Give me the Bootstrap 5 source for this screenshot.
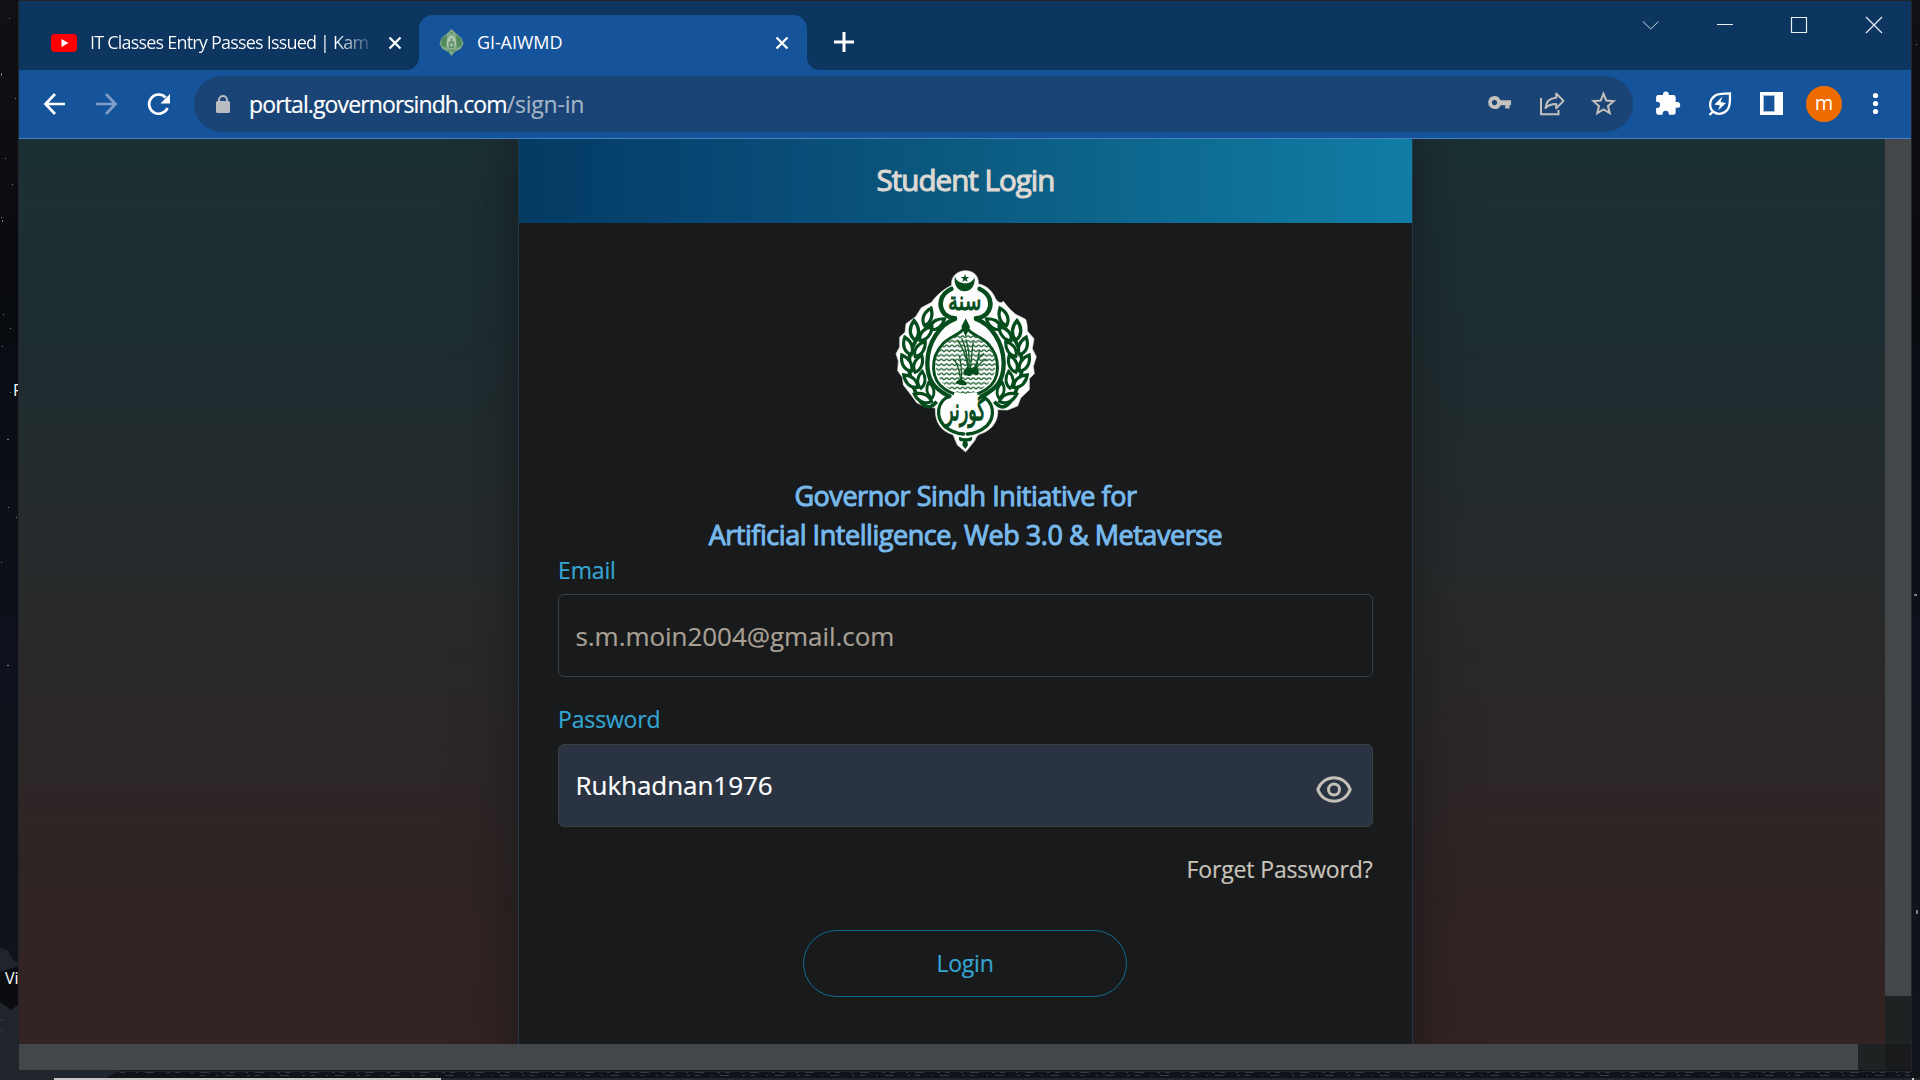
<!DOCTYPE html>
<html lang="en">
<head>
<meta charset="utf-8">
<title>GI-AIWMD</title>
<link href="https://cdn.jsdelivr.net/npm/bootstrap@5.3.0/dist/css/bootstrap.min.css" rel="stylesheet">
<style>
html,body{height:1080px;overflow:hidden}
body{font-family:"Open Sans","Noto Sans",sans-serif;background:#0b0d14;color:#fff}
.desk{position:absolute;inset:0;width:1920px;height:1080px}
.desk-label{position:absolute;font-size:16px;line-height:20px}
.win{width:1892px;height:1070px;margin:1px 0 0 19px;box-shadow:0 0 0 1px #232427}
.strip{height:69px;background:#0c3560}
.tab-idle{width:400px;padding-left:32px;height:69px;padding-top:14px}
.tab-live{width:388px;height:55px;margin-top:14px;padding-left:20px;background:#15539a;border-radius:14px 14px 0 0;position:relative}
.tab-live::before,.tab-live::after{content:"";position:absolute;bottom:0;width:12px;height:12px}
.tab-live::before{left:-12px;background:radial-gradient(circle at 0 0,#0c3560 11.5px,#15539a 12px)}
.tab-live::after{right:-12px;background:radial-gradient(circle at 100% 0,#0c3560 11.5px,#15539a 12px)}
.tab-title{font-size:18px;line-height:24px;white-space:nowrap;margin-bottom:2px}
.t1{width:279px;margin-left:13px;margin-right:19px;letter-spacing:-.8px;background:linear-gradient(90deg,#fff 88%,#3d5c7e);-webkit-background-clip:text;color:transparent}
.t2{margin-left:13px;letter-spacing:-.1px}
.tools{height:69px;background:#15539a;border-bottom:1px solid #4a7fc0}
.omni{width:1439px;height:56px;border-radius:28px;background:#194475;padding-left:22px;padding-right:17px}
.url{font-size:23px;line-height:30px;margin-left:19px;margin-bottom:1px;letter-spacing:-.88px;-webkit-text-stroke:.2px}
.url i{font-style:normal;color:#a3b4c8;letter-spacing:-.2px}
.ava{width:36px;height:36px;border-radius:50%;background:#ef6c00;font-size:20px;line-height:33px;text-align:center}
.page{height:905px;background:linear-gradient(#1b3033 0%,#1e2d31 22%,#282a2b 50%,#2f2424 80%,#332323 100%);width:1866px;overflow:hidden}
.login{width:895px;height:1000px;margin-left:499px;background:#181a1b;box-shadow:0 0 45px 5px rgba(20,22,23,.65);border-left:1px solid #24364a;border-right:1px solid #24364a}
.login-head{height:84px;background:linear-gradient(90deg,#033b63 0%,#074672 20%,#0b5a80 50%,#117da5 100%);font-size:29.500px;letter-spacing:-.95px;-webkit-text-stroke:1.1px #dcd9d4;color:#dcd9d4;line-height:81px}
.logo{width:170px;height:210px;margin:32px auto 0 361px}
.inst{font-size:27px;letter-spacing:-.46px;-webkit-text-stroke:1px #77b9ec;line-height:39px;color:#77b9ec;margin-top:11px}
.pad{padding:0 39.5px 0 38.5px}
.lab{color:#35a5d2;font-size:23px;line-height:34px;letter-spacing:-.15px;padding-left:.5px}
.field{height:83px;border:1px solid #3b3f42;border-radius:6px;padding:0 20px 0 17px;font-size:26px;letter-spacing:-.05px;-webkit-text-stroke:.2px;background:#181a1b;color:#a8a095}
.field.fill2{background:#2a3342;color:#fff}
.forgot{font-size:23px;line-height:34px;letter-spacing:-.15px;color:#c8c3bb}
.enter{width:324px;height:67px;border:1px solid #106c93;border-radius:34px;color:#35a5d2;font-size:23px;letter-spacing:-.2px;padding:0}
.lab,.forgot,.enter{-webkit-text-stroke:.2px}
.vbar{width:26px;height:905px;background:#1e2223}
.vthumb{height:857px;background:#434749}
.hbar{height:26px;background:#1e2223}
.hthumb{width:1839px;background:#434749}
.corner{width:26px;background:#181a1b}
svg{flex-shrink:0;display:block}
</style>
<script src="https://cdn.jsdelivr.net/npm/bootstrap@5.3.0/dist/js/bootstrap.bundle.min.js"></script>
</head>
<body>
<svg class="desk" viewBox="0 0 1920 1080">
<defs><linearGradient id="night" x2="0" y2="1"><stop offset="0" stop-color="#101114"/><stop offset=".25" stop-color="#090b10"/><stop offset=".6" stop-color="#0d111b"/><stop offset="1" stop-color="#10131a"/></linearGradient></defs>
<path fill="url(#night)" d="M0 0H1920V1080H0z"/>
<path fill="#20242d" d="M0 948l8 2 5 10 6 4v116H0z"/><path fill="#0b0c10" d="M0 972l19-6v38l-8 6-11-8z"/>
<path fill="#20252e" d="M0 1042h19v28H120l-14 8H0z"/>
<path fill="none" stroke="#343842" stroke-dasharray="5 11 2 7 9 13 3 5" d="M120 1072.500H1910M200 1075.500H1910M0 1030l18 4M0 1020l18 2"/>
<g fill="#7d8187"><path d="M5 158h1v1H5zM12 184h1v1h-1zM1 217h1v1H1zM2 220h1v2H2zM3 314h1v1H3zM10 328h1v1h-1zM2 346h1v1H2zM10 392h1v1h-1zM7 439h2v1H7zM8 507h1v1H8zM16 517h1v1h-1zM1 562h1v1H1zM1 73h1v3H1zM1916 44h1v1h-1zM1916 910h2v4h-2zM15 98h1v1h-1zM9 18h1v1H9zM1914 594h3v2h-3zM7 665h2v1H7z"/></g>
<path fill="#252629" d="M0 1078H1920v2H0z"/><path fill="#c9c7c6" d="M54 1078H441v2H54zM1912 1078h2v2h-2z"/>
</svg>
<span class="desk-label" style="left:13px;top:380px">F</span>
<span class="desk-label" style="left:5px;top:968px">Vi</span>
<main class="win position-relative d-flex flex-column">
<div class="strip d-flex">
 <div class="tab-idle d-flex align-items-center">
  <svg width="26" height="18" viewBox="0 0 26 18"><rect width="26" height="18" rx="4" fill="#f00"/><path fill="#fff" d="M10.500 5v8l7-4z"/></svg>
  <span class="tab-title t1">IT Classes Entry Passes Issued | Kam</span>
  <svg width="14" height="14" viewBox="0 0 14 14"><path d="M1.500 1.500l11 11M12.500 1.500l-11 11" stroke="#fff" stroke-width="2.300"/></svg>
 </div>
 <div class="tab-live d-flex align-items-center">
  <svg width="25" height="27" viewBox="0 0 25 27"><path fill="#82a985" d="M12.500 0l4 4 6 5 2 6-3 5-6 3-3 4-3-4-6-3-3-5 2-6 6-5z"/><path fill="#4f8a5c" d="M3 9l5-3-1 13-5-3zM22 9l-5-3 1 13 5-3z"/><ellipse cx="12.500" cy="14" rx="4.500" ry="7.500" fill="#b4c8b2"/><path stroke="#5f9169" stroke-width="1.800" fill="none" d="M12.500 9.500v3M10.500 13.500h4v5h-4zM9.500 21.500h6M12.500 3v2.500"/></svg>
  <span class="tab-title t2">GI-AIWMD</span>
  <svg class="ms-auto me-3" style="transform:translateX(-2px)" width="14" height="14" viewBox="0 0 14 14"><path d="M1.500 1.500l11 11M12.500 1.500l-11 11" stroke="#fff" stroke-width="2.300"/></svg>
 </div>
 <svg style="margin:31px 0 0 27px" width="20" height="20" viewBox="0 0 20 20"><path d="M10 0v20M0 10h20" stroke="#fff" stroke-width="3"/></svg>
 <svg class="ms-auto" style="margin-top:15px;margin-right:28px" width="241" height="18" viewBox="0 0 241 18"><g fill="none" stroke="#e9eef4" stroke-width="1.200"><path stroke-width=".9" d="M1 5.500l7.700 7.500 7.700-7.500"/><path d="M75 8.500h16M149.500 1.500h15v15h-15zM224 1l16 16M240 1l-16 16"/></g></svg>
</div>
<div class="tools d-flex align-items-center">
 <svg width="175" height="28" viewBox="19 89 175 28"><g fill="none" stroke="#fff" stroke-width="2.700"><path d="M65 103H46M55 93l-9.500 10L55 113"/><path stroke="#7f9fca" d="M96 103h19M106 93l9.500 10-9.500 10"/><path d="M167.500 107a9.600 9.600 0 1 1-1.800-10.500"/></g><path fill="#fff" d="M170 93v9.500h-9.500z"/></svg>
 <div class="omni d-flex align-items-center">
  <svg width="14" height="18" viewBox="0 0 14 18"><rect y="6" width="14" height="12" rx="1.500" fill="#b9bcc0"/><path fill="none" stroke="#b9bcc0" stroke-width="2" d="M3 7V5a4 4 0 0 1 8 0v2"/></svg>
  <span class="url">portal.governorsindh.com<i>/sign-in</i></span>
  <svg class="ms-auto" width="128" height="26" viewBox="1488 91 128 26"><path fill="#c3c0be" fill-rule="evenodd" d="M1494.500 96a6.500 6.500 0 0 1 6 4.200H1511v5h-1.500v3.200h-4.200v-3.200h-4.600a6.500 6.500 0 1 1-6.200-9.200zm0 4a2.500 2.500 0 1 0 0 5.200 2.500 2.500 0 0 0 0-5.200z"/><g fill="none" stroke="#c3c0be" stroke-width="2"><path d="M1541 98v16.300h17.500V110"/><path stroke-linejoin="round" d="M1545.500 108c.6-6 4-10 10.700-10.300V93.500l7.300 7.400-7.300 7.300v-4.100c-5 0-8 1.100-10.700 3.900z"/><path stroke-width="2.100" d="M1603.500 93.800l2.800 6.800 7.200.6-5.500 4.800 1.700 7.100-6.200-3.700-6.200 3.700 1.700-7.100-5.500-4.800 7.200-.6z"/></g></svg>
 </div>
 <svg style="margin-left:22px" width="132" height="28" viewBox="1655 90 132 28"><path transform="translate(-1)" fill="#fff" d="M1678.300 102h-1.600v-4.600a2.300 2.300 0 0 0-2.300-2.300h-4.600v-.7a2.900 2.900 0 0 0-5.800 0v.7h-4.600a2.300 2.300 0 0 0-2.300 2.300v4.300h.9a3.100 3.100 0 0 1 0 6.200h-.9v4.600a2.300 2.300 0 0 0 2.300 2.300h4.200v-1a3.100 3.100 0 0 1 6.200 0v1h4.600a2.300 2.300 0 0 0 2.300-2.300V107.800h1.600a2.900 2.900 0 0 0 0-5.800z"/><path fill="none" stroke="#fff" stroke-width="2.300" d="M1709.500 115l3.500-3.500c-5-5-3-12.500 2-15.800 4-2.500 9-1.700 15-2.200-.2 6 .7 11.500-2.300 15.800-3.500 5-10 6-14.700 2.200"/><path fill="#fff" d="M1722.500 96.500l-8 8 5.500 1-2 5 8-7.500-5.500-1zM1760 92h23v23h-23z"/><path fill="#15539a" stroke="#a7bedb" d="M1763.500 95.500h11v16h-11z"/></svg>
 <span class="ava" style="margin-left:19px">m</span>
 <svg style="margin-left:30px" width="7" height="24" viewBox="0 0 7 24"><g fill="#fff"><circle cx="3.500" cy="3.500" r="2.600"/><circle cx="3.500" cy="11.500" r="2.600"/><circle cx="3.500" cy="19.500" r="2.600"/></g></svg>
</div>
<div class="d-flex">
<div class="page">
<section class="login">
 <div class="login-head text-center">Student Login</div>
 <svg class="logo" viewBox="0 0 510 630">
  <defs>
   <pattern id="wave" width="16" height="14" patternUnits="userSpaceOnUse" y="2"><path fill="none" stroke="#175b29" stroke-width="4" d="M-4 5q4 5 8 0t8 0 8 0"/></pattern>
   <path id="leaf" d="M0 30C-20 12-16-14 2-34 18-12 18 14 0 30z"/>
   <g id="wreath" fill="#fff" stroke="#064d1d" stroke-width="11"><path fill="none" d="M170 195Q60 270 95 380T170 440" stroke-width="11"/>
    <use href="#leaf" transform="translate(142 187) rotate(18) scale(.88)"/><use href="#leaf" transform="translate(170 208) rotate(52) scale(.85)"/>
    <use href="#leaf" transform="translate(103 228) rotate(-5) scale(.92)"/><use href="#leaf" transform="translate(136 237) rotate(40) scale(.85)"/>
    <use href="#leaf" transform="translate(84 275) rotate(-22) scale(.88)"/><use href="#leaf" transform="translate(119 283) rotate(32) scale(.85)"/>
    <use href="#leaf" transform="translate(80 326) rotate(-32) scale(.88)"/><use href="#leaf" transform="translate(114 328) rotate(20) scale(.85)"/>
    <use href="#leaf" transform="translate(93 380) rotate(-50) scale(.88)"/><use href="#leaf" transform="translate(124 376) rotate(3) scale(.8)"/>
    <use href="#leaf" transform="translate(130 430) rotate(-68) scale(.88)"/><use href="#leaf" transform="translate(151 407) rotate(-15) scale(.75)"/></g>
  </defs>
  <path fill="#fdfdfd" stroke="#dfe0d8" stroke-width="2" d="M257 47C282 47 297 64 295 87C318 90 338 108 347 132Q360 150 370 139L389 162 407 178 437 193Q443 209 442 228L462 251 457 281 469 305 460 334 463 356 448 371 448 404 422 429 413 453 383 465 353 464C356 490 342 521 307 535Q290 538 285 556L257 591 232 570 219 539C183 529 164 501 166 459L132 454 110 443 94 421 70 390 67 367 53 347 55 318 48 296 59 276 59 246 75 232 78 206 107 185 124 158 155 142C164 128 185 105 215 91 212 64 232 47 257 47z"/>
  <use href="#wreath"/><use href="#wreath" transform="translate(513 0) scale(-1 1)"/>
  <g fill="none" stroke="#064d1d" stroke-linecap="round">
   <path stroke-width="14" d="M214 102C181 117 172 151 194 177Q211 190 225 190M299 102C332 117 341 151 319 177Q302 190 288 190"/>
   <path stroke-width="13" d="M225 192C181 207 142 263 142 325 142 374 160 399 207 424M288 192C332 207 371 263 371 325 371 374 353 399 306 424"/>
   <path stroke-width="9" fill="#fff" d="M257 210C246 240 214 240 190 265 148 310 152 375 195 403Q222 422 257 422T319 403C361 375 365 310 323 265 299 240 267 240 257 210z"/>
   <path stroke="#fff" stroke-width="22" stroke-linecap="butt" d="M222 424h70"/>
   <path stroke-width="10" d="M210 423C168 439 168 486 192 512Q219 535 251 537M303 423C345 439 345 486 321 512Q294 535 262 537"/>
  </g>
  <path fill="#064d1d" d="M244 215l13-25 13 25-13 30zM225 63C229 90 277 93 283 66c5 24-10 43-29 43-20 0-35-20-29-46zM255 57l3 9h10l-8 6 3 9-8-5-8 5 3-9-8-6h10zM238 545q18 10 38 0 4 15-14 14l2 12-8 11-9-11 2-12q-16 1-11-14z"/>
  <circle cx="257" cy="325" r="91" fill="url(#wave)"/>
  <g fill="none" stroke="#175b29" stroke-width="4"><path d="M265 345Q258 290 232 255M264 345Q263 290 245 250M267 345Q270 290 258 253M271 345Q276 290 280 260M242 376Q237 330 221 312M245 376Q245 330 238 302M282 345Q292 306 312 295M286 347Q299 321 320 312M288 345l10-58"/></g>
  <g fill="#064d1d"><path d="M250 350l10-14 14 4 12-6 11 12-3 15-16-4-9 7-16-5zM228 380q16-14 32 3l-2 8q-20 0-30-7z"/></g>
  <g fill="#064d1d" font-family="DejaVu Sans,sans-serif" text-anchor="middle"><text x="254" y="166" font-size="78" textLength="100" lengthAdjust="spacingAndGlyphs" stroke="#064d1d" stroke-width="3">سنة</text><text x="256" y="495" font-size="92" textLength="122" lengthAdjust="spacingAndGlyphs" stroke="#064d1d" stroke-width="4">گورنر</text></g>
 </svg>
 <div class="inst text-center">Governor Sindh Initiative for<br>Artificial Intelligence, Web 3.0 &amp; Metaverse</div>
 <div class="pad">
  <div class="lab" style="margin-top:-1px;margin-bottom:7px">Email</div>
  <div class="field d-flex align-items-center"><span style="padding-top:2px">s.m.moin2004@gmail.com</span></div>
  <div class="lab" style="margin-top:25px;margin-bottom:8px">Password</div>
  <div class="field fill2 d-flex align-items-center justify-content-between"><span>Rukhadnan1976</span><svg style="margin-top:8px" width="36" height="27" viewBox="0 0 36 27"><g fill="none" stroke="#c5c0b8" stroke-width="3"><path d="M1.800 13.500C7.500-2.300 28.500-2.300 34.200 13.500 28.500 29.300 7.500 29.300 1.800 13.500z"/><circle cx="18" cy="13.500" r="5.500"/></g></svg></div>
  <div class="forgot text-end" style="margin-top:25px">Forget Password?</div>
  <button class="btn enter d-block mx-auto" style="margin-top:44px">Login</button>
 </div>
</section>
</div>
<div class="vbar"><div class="vthumb"></div></div>
</div>
<div class="hbar d-flex justify-content-between"><div class="hthumb"></div><div class="corner"></div></div>
</main>
</body>
</html>
